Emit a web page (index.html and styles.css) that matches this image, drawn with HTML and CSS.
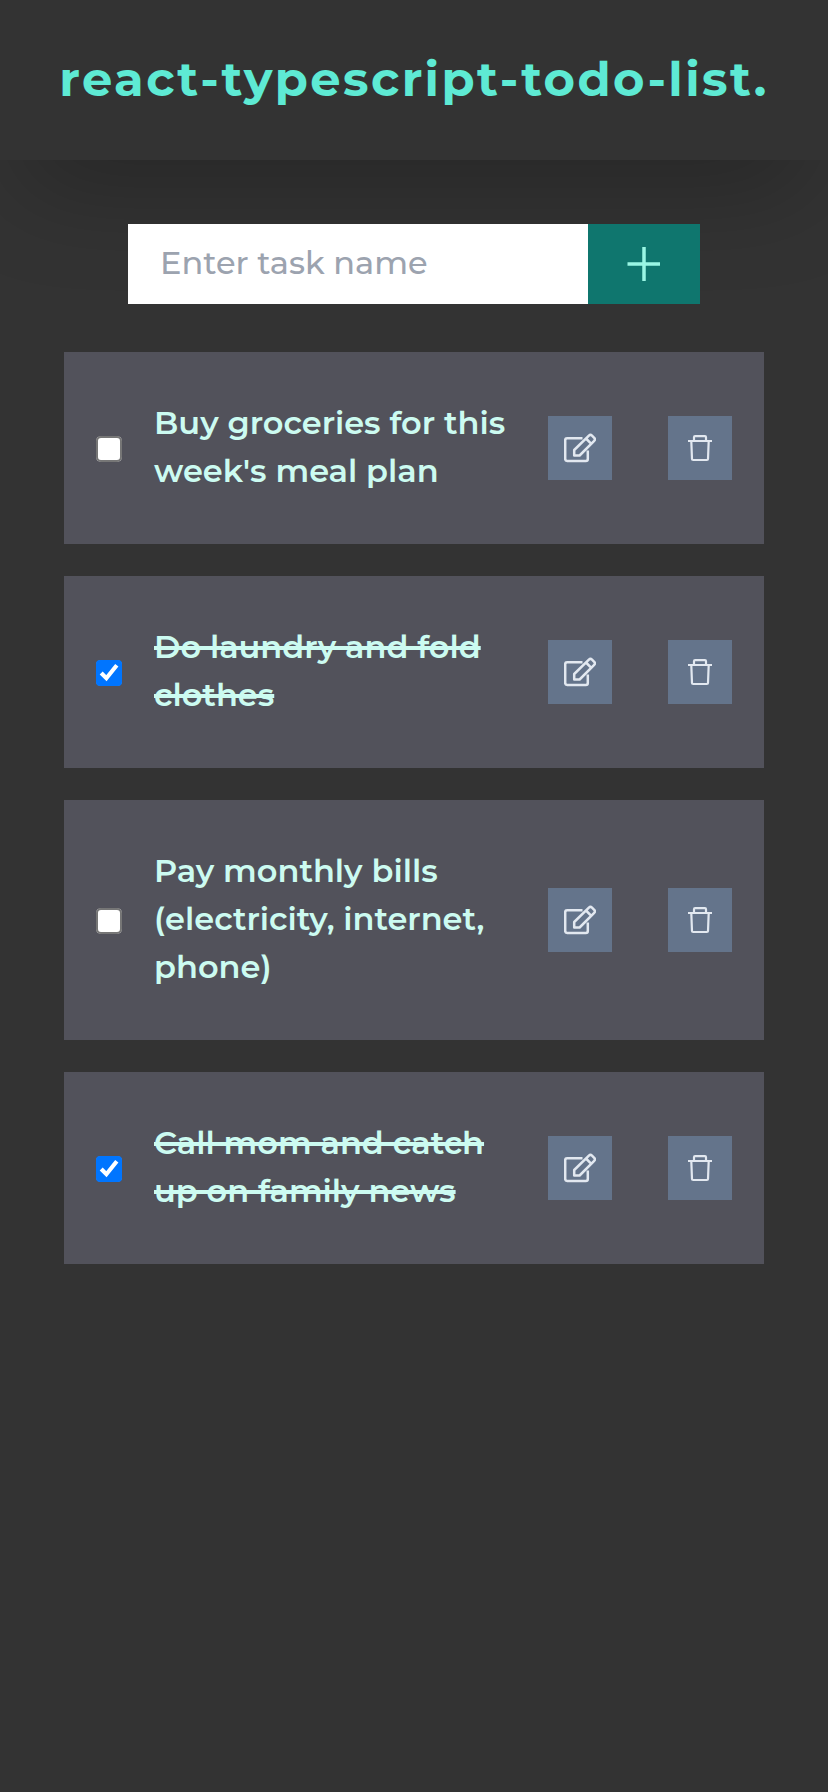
FILE: index.html
```html
<!DOCTYPE html>
<html lang="en">
<head>
<meta charset="utf-8">
<title>react-typescript-todo-list.</title>
<link rel="stylesheet" href="styles.css">
</head>
<body>
<svg class="sprite" aria-hidden="true">
  <symbol id="edit" viewBox="0 0 32 32">
    <path d="M18.500 6.200H3.200A2 2 0 0 0 1.200 8.200V27A2 2 0 0 0 3.200 29H21.800A2 2 0 0 0 23.800 27V18.500"/>
    <path d="M10.200 23.500V18L24.900 3.600a2.200 2.200 0 0 1 3.100 0L30.200 5.800a2.200 2.200 0 0 1 0 3.100L15.600 23.500ZM22 6.500L27.300 11.800"/>
  </symbol>
  <symbol id="trash" viewBox="0 0 32 32">
    <path d="M4 9H28M10 9V5.300Q10 4.200 11.100 4.200H20.900Q22 4.200 22 5.300V9M7.300 9L8 27Q8 28 9.200 28H22.800Q24 28 24 27L24.700 9"/>
  </symbol>
</svg>
<header class="header"><h1 class="title">react-typescript-todo-list.</h1></header>
<main class="main">
  <form class="form">
    <input class="field" type="text" placeholder="Enter task name">
    <button class="add" type="button" aria-label="Add task"><svg viewBox="0 0 36 36"><path d="M1.500 18H34M18 1V35"/></svg></button>
  </form>
  <ul class="list">
    <li class="task">
      <input class="check" type="checkbox">
      <p class="text"><span class="line">Buy groceries for this</span> <span class="line">week's meal plan</span></p>
      <div class="actions"><button class="action" aria-label="Edit"><svg class="edit"><use href="#edit"/></svg></button><button class="action" aria-label="Delete"><svg class="trash"><use href="#trash"/></svg></button></div>
    </li>
    <li class="task">
      <input class="check" type="checkbox" checked>
      <p class="text done"><span class="line">Do laundry and fold</span> <span class="line">clothes</span></p>
      <div class="actions"><button class="action" aria-label="Edit"><svg class="edit"><use href="#edit"/></svg></button><button class="action" aria-label="Delete"><svg class="trash"><use href="#trash"/></svg></button></div>
    </li>
    <li class="task">
      <input class="check" type="checkbox">
      <p class="text"><span class="line">Pay monthly bills</span> <span class="line">(electricity, internet,</span> <span class="line">phone)</span></p>
      <div class="actions"><button class="action" aria-label="Edit"><svg class="edit"><use href="#edit"/></svg></button><button class="action" aria-label="Delete"><svg class="trash"><use href="#trash"/></svg></button></div>
    </li>
    <li class="task">
      <input class="check" type="checkbox" checked>
      <p class="text done"><span class="line">Call mom and catch</span> <span class="line">up on family news</span></p>
      <div class="actions"><button class="action" aria-label="Edit"><svg class="edit"><use href="#edit"/></svg></button><button class="action" aria-label="Delete"><svg class="trash"><use href="#trash"/></svg></button></div>
    </li>
  </ul>
</main>
</body>
</html>
```
FILE: styles.css
```css
* { box-sizing: border-box; }
body { margin: 0; min-height: 100vh; background: #333; font-family: Montserrat, Inter, sans-serif; overflow-x: hidden; }
button { border: 0; padding: 0; }
.sprite { display: none; }
.header { height: 160px; padding-bottom: 2px; display: flex; align-items: center; justify-content: center; background: #333; box-shadow: 0 50px 100px -24px rgb(0 0 0 / .25); }
.title { margin: 0; font-size: 48px; line-height: 64px; font-weight: 700; letter-spacing: 2.4px; color: #5eead4; white-space: nowrap; }
.main { padding: 64px; }
.form { display: flex; margin: 0 64px 48px; height: 80px; }
.field { flex: 1; min-width: 0; border: 0; border-radius: 0; padding: 0 32px 2px; background: #fff; font: 500 32px/48px Montserrat, Inter, sans-serif; }
.field::placeholder { color: #9ca3af; opacity: 1; }
.add { width: 112px; display: grid; place-items: center; background: #0f766e; }
.add svg { width: 36px; height: 36px; fill: none; stroke: #99f6e4; stroke-width: 3.500; }
.list { margin: 0; padding: 0; list-style: none; display: grid; gap: 32px; }
.task { display: flex; align-items: center; gap: 32px; padding: 48px 32px; background: #52525b; }
.check { zoom: 2; width: 13px; height: 13px; margin: 1px 0 0; flex: none; }
.text { flex: 1; margin: -1px 0 1px; font-size: 32px; line-height: 48px; font-weight: 600; color: #ccfbf1; }
.line { display: block; width: max-content; }
.done .line { text-decoration: line-through 4px; }
.actions { display: flex; gap: 56px; }
.action { width: 64px; height: 64px; display: grid; place-items: center; background: #64748b; }
.action svg { width: 32px; height: 32px; fill: none; stroke: #e2e8f0; stroke-width: 2.500; stroke-linejoin: round; }
.action .trash { stroke-width: 2.200; }
```
